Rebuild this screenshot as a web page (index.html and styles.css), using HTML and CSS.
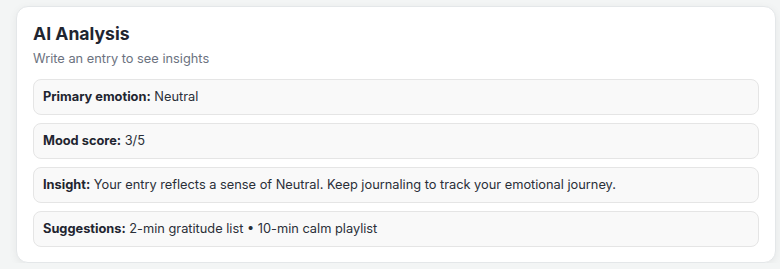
FILE: index.html
```html
<!DOCTYPE html>
<html lang="en">
<head>
    <meta charset="UTF-8">
    <meta name="viewport" content="width=device-width, initial-scale=1.0">
    <title>AI Analysis</title>
    <link rel="stylesheet" href="styles.css">
</head>
<body>
    <div class="page">
        <section class="card">
            <h2>AI Analysis</h2>
            <p class="subtitle">Write an entry to see insights</p>

            <div class="results">
                <div class="result-item"><strong>Primary emotion:</strong> Neutral</div>
                <div class="result-item"><strong>Mood score:</strong> 3/5</div>
                <div class="result-item"><strong>Insight:</strong> Your entry reflects a sense of Neutral. Keep journaling to track your emotional journey.</div>
                <div class="result-item"><strong>Suggestions:</strong> 2-min gratitude list • 10-min calm playlist</div>
            </div>
        </section>
    </div>
</body>
</html>
```

FILE: styles.css
```css
body {
    font-family: 'Inter', 'Noto Sans', sans-serif;
    margin: 0;
    padding: 0;
    background: #f3f5f5;
    color: #1f2530;
}

.page {
    padding: 6px 4px 0 16px;
}

.card {
    background: white;
    border: 1px solid #e4e7e9;
    border-radius: 12px;
    padding: 15px 16px 15px 16px;
    box-shadow: 0 2px 8px rgba(0, 0, 0, 0.06);
}

h2 {
    margin: 0 0 4px 0;
    font-size: 17.6px;
    line-height: 24px;
    font-weight: 700;
    color: #1f2530;
}

.subtitle {
    margin: 0 0 11px 0;
    font-size: 12.8px;
    line-height: 18px;
    color: #6b7280;
}

.results {
    display: flex;
    flex-direction: column;
    gap: 8px;
}

.result-item {
    background: #f9f9f9;
    border: 1px solid #e5e5e5;
    border-radius: 8px;
    padding: 8px 9px;
    font-size: 12.8px;
    line-height: 18px;
    color: #2a2f38;
}

.result-item strong {
    font-weight: 700;
    color: #1f2530;
}
```
